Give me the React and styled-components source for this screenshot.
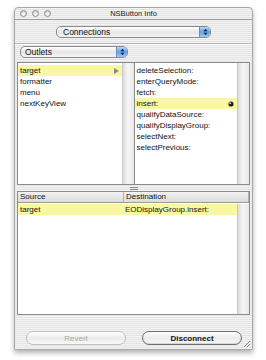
import styled, { createGlobalStyle } from "styled-components";

const GlobalStyle = createGlobalStyle`
  body {
    margin: 0;
    background: #ffffff;
    font-family: "Liberation Sans", Arial, sans-serif;
  }
`;

const pinstripe = `repeating-linear-gradient(to bottom, #f3f3f3 0px, #f3f3f3 1px, #e4e4e4 1px, #e4e4e4 2px)`;

const Page = styled.div`
  padding: 7px 0 0 14px;
  width: 266px;
  height: 360px;
  box-sizing: border-box;
`;

const Window = styled.div`
  width: 239px;
  height: 343px;
  box-sizing: border-box;
  border: 1px solid #a8a8a8;
  border-radius: 4px 4px 0 0;
  background: ${pinstripe};
  box-shadow: 0 3px 5px rgba(0, 0, 0, 0.3);
  display: flex;
  flex-direction: column;
  position: relative;
`;

const TitleBar = styled.div`
  height: 11px;
  border-bottom: 1px solid #9a9a9a;
  display: flex;
  align-items: center;
  position: relative;
  font-size: 7.5px;
  color: #222;
`;

const Lights = styled.div`
  display: flex;
  gap: 5px;
  padding-left: 5px;
`;

const Light = styled.span`
  width: 7px;
  height: 7px;
  box-sizing: border-box;
  border-radius: 50%;
  border: 1px solid #8d8d8d;
  background: radial-gradient(circle at 50% 70%, #fafafa, #c8c8c8);
`;

const Title = styled.div`
  position: absolute;
  left: 0;
  right: 0;
  text-align: center;
`;

const ConnRow = styled.div`
  height: 23px;
  display: flex;
  align-items: center;
  justify-content: center;
  border-bottom: 1px solid #b4b4b4;
  box-shadow: 0 1px 0 #ffffff;
`;

const OutletsRow = styled.div`
  padding: 2px 0 0 5px;
  height: 13px;
  display: flex;
`;

const Popup = styled.div`
  width: ${p => p.w}px;
  height: 12px;
  box-sizing: border-box;
  border: 1px solid #8a8a8a;
  border-radius: 5px;
  background: linear-gradient(#ffffff, #e6e6e6 50%, #f4f4f4);
  display: flex;
  align-items: center;
  overflow: hidden;
  font-size: 8.5px;
  color: #111;
`;

const PopupLabel = styled.span`
  flex: 1;
  padding-left: ${p => p.pad}px;
`;

const PopupArrows = styled.span`
  width: 10px;
  height: 100%;
  background: linear-gradient(#b4d6f8, #62a0e8 50%, #9ccaf6);
  border-left: 1px solid #6a8fc5;
  display: flex;
  align-items: center;
  justify-content: center;
`;

const Browser = styled.div`
  margin: 3px 2px 0 2px;
  height: 123px;
  box-sizing: border-box;
  border: 1px solid #8c8c8c;
  background: #ffffff;
  display: flex;
`;

const Column = styled.div`
  width: ${p => p.w}px;
  display: flex;
  border-right: ${p => (p.last ? "none" : "1px solid #8c8c8c")};
`;

const List = styled.div`
  flex: 1;
  padding-top: 2px;
  font-size: 8px;
  color: #111;
`;

const Row = styled.div`
  height: 11px;
  line-height: 11px;
  padding-left: 2px;
  padding-right: 3px;
  display: flex;
  align-items: center;
  justify-content: space-between;
  background: ${p => (p.selected ? "#faf7a4" : "transparent")};
  white-space: nowrap;
`;

const Scroller = styled.div`
  width: 11px;
  border-left: 1px solid #c8c8c8;
  background: linear-gradient(to right, #dcdcdc, #f6f6f6 45%, #e8e8e8);
`;

const Splitter = styled.div`
  height: 6px;
  display: flex;
  align-items: center;
  justify-content: center;
`;

const Dimple = styled.span`
  width: 8px;
  height: 3px;
  border-top: 1px solid #888;
  border-bottom: 1px solid #888;
  box-sizing: border-box;
`;

const Table = styled.div`
  margin: 0 2px;
  height: 124px;
  box-sizing: border-box;
  border: 1px solid #8c8c8c;
  background: #ffffff;
  display: flex;
  flex-direction: column;
  font-size: 8px;
  color: #111;
`;

const Header = styled.div`
  height: 10px;
  display: flex;
  background: linear-gradient(#f2f2f2, #dcdcdc);
  border-bottom: 1px solid #9a9a9a;
`;

const HeadCell = styled.div`
  width: ${p => (p.w ? p.w + "px" : "auto")};
  flex: ${p => (p.w ? "none" : 1)};
  line-height: 10px;
  padding-left: 2px;
  border-right: 1px solid #b0b0b0;
`;

const TableBody = styled.div`
  flex: 1;
  display: flex;
  padding-top: 1px;
`;

const TableRows = styled.div`
  flex: 1;
`;

const TRow = styled.div`
  height: 11px;
  line-height: 11px;
  display: flex;
  background: ${p => (p.selected ? "#faf7a4" : "transparent")};
`;

const Cell = styled.div`
  width: ${p => (p.w ? p.w + "px" : "auto")};
  flex: ${p => (p.w ? "none" : 1)};
  padding-left: 2px;
`;

const Buttons = styled.div`
  margin-top: 16px;
  display: flex;
  gap: 16px;
  padding-left: 11px;
`;

const AquaButton = styled.div`
  width: 100px;
  height: 14px;
  box-sizing: border-box;
  border-radius: 7px;
  border: 1px solid ${p => (p.disabled ? "#c0c0c0" : "#6e6e6e")};
  background: linear-gradient(#ffffff, #ececec 50%, #f8f8f8);
  box-shadow: ${p => (p.disabled ? "none" : "inset 0 -1px 1px rgba(0,0,0,0.15)")};
  display: flex;
  align-items: center;
  justify-content: center;
  font-size: 8px;
  font-weight: ${p => (p.disabled ? "normal" : "bold")};
  color: ${p => (p.disabled ? "#a8a8a8" : "#111")};
`;

const Grip = styled.svg`
  position: absolute;
  right: 1px;
  bottom: 1px;
`;

const outlets = ["target", "formatter", "menu", "nextKeyView"];
const actions = [
  "deleteSelection:",
  "enterQueryMode:",
  "fetch:",
  "insert:",
  "qualifyDataSource:",
  "qualifyDisplayGroup:",
  "selectNext:",
  "selectPrevious:",
];

const Arrows = () => (
  <svg width="5" height="8" viewBox="0 0 5 8">
    <path d="M0.5 3.2 L2.5 0.8 L4.5 3.2 Z" fill="#10254a" />
    <path d="M0.5 4.8 L2.5 7.2 L4.5 4.8 Z" fill="#10254a" />
  </svg>
);

const App = () => (
  <Page>
    <GlobalStyle />
    <Window>
      <TitleBar>
        <Lights>
          <Light />
          <Light />
          <Light />
        </Lights>
        <Title>NSButton Info</Title>
      </TitleBar>

      <ConnRow>
        <Popup w={155}>
          <PopupLabel pad={6}>Connections</PopupLabel>
          <PopupArrows><Arrows /></PopupArrows>
        </Popup>
      </ConnRow>

      <OutletsRow>
        <Popup w={108}>
          <PopupLabel pad={4}>Outlets</PopupLabel>
          <PopupArrows><Arrows /></PopupArrows>
        </Popup>
      </OutletsRow>

      {/* Navegador de outlets y acciones */}
      <Browser>
        <Column w={116}>
          <List>
            {outlets.map((o, i) => (
              <Row key={o} selected={i === 0}>
                {o}
                {i === 0 && (
                  <svg width="5" height="6" viewBox="0 0 5 6">
                    <path d="M0 0 L5 3 L0 6 Z" fill="#8a8a8a" />
                  </svg>
                )}
              </Row>
            ))}
          </List>
          <Scroller />
        </Column>
        <Column w={115} last>
          <List>
            {actions.map(a => (
              <Row key={a} selected={a === "insert:"}>
                {a}
                {a === "insert:" && (
                  <svg width="6" height="6" viewBox="0 0 6 6">
                    <circle cx="3" cy="3" r="2.6" fill="#222" />
                    <circle cx="2.2" cy="2.2" r="0.9" fill="#ddd" />
                  </svg>
                )}
              </Row>
            ))}
          </List>
          <Scroller />
        </Column>
      </Browser>

      <Splitter>
        <Dimple />
      </Splitter>

      {/* Tabla de conexiones */}
      <Table>
        <Header>
          <HeadCell w={103}>Source</HeadCell>
          <HeadCell>Destination</HeadCell>
        </Header>
        <TableBody>
          <TableRows>
            <TRow selected>
              <Cell w={103}>target</Cell>
              <Cell>EODisplayGroup.insert:</Cell>
            </TRow>
          </TableRows>
          <Scroller />
        </TableBody>
      </Table>

      <Buttons>
        <AquaButton disabled>Revert</AquaButton>
        <AquaButton>Disconnect</AquaButton>
      </Buttons>

      <Grip width="8" height="8" viewBox="0 0 8 8">
        <path d="M7 1 L1 7 M7 4 L4 7" stroke="#888" strokeWidth="1" />
        <path d="M8 2 L2 8 M8 5 L5 8" stroke="#fff" strokeWidth="1" />
      </Grip>
    </Window>
  </Page>
);

export default App;
